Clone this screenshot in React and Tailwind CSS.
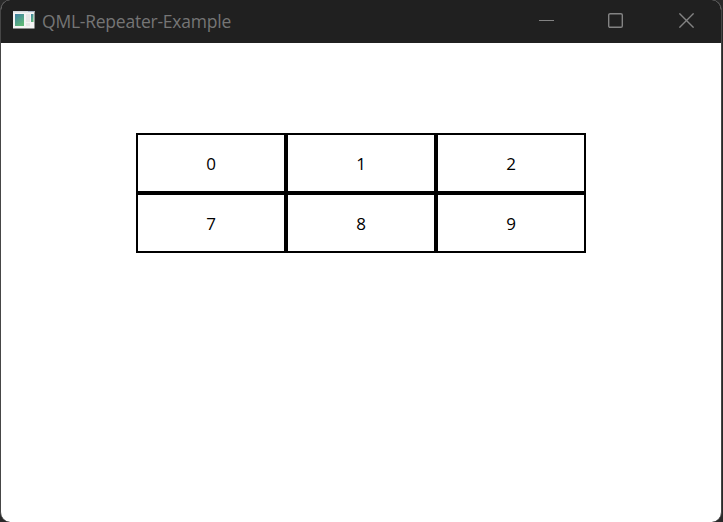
const cells = [0, 1, 2, 7, 8, 9];

function AppIcon() {
  return (
    <svg width="22" height="18" viewBox="0 0 22 18" className="mb-[2px] shrink-0">
      <defs>
        <linearGradient id="pane" x1="0" y1="0" x2="0.6" y2="1">
          <stop offset="0" stopColor="#3f7fa6" />
          <stop offset="1" stopColor="#5fb777" />
        </linearGradient>
      </defs>
      <rect width="21.5" height="17.5" fill="#f4f4f4" />
      <rect width="21.5" height="1.5" fill="#d5d9de" />
      <rect x="15" width="6" height="1" fill="#a8b4c8" />
      <rect x="2" y="3" width="9" height="12" fill="url(#pane)" />
      <rect x="13" y="3" width="4" height="8" fill="#e7e7e7" />
      <rect x="13" y="12" width="4" height="3" fill="#e7e7e7" />
      <rect x="18" y="3" width="2.5" height="8" fill="url(#pane)" />
    </svg>
  );
}

function WindowControls() {
  return (
    <div className="flex h-full text-[#838383]">
      <button aria-label="Minimize" className="flex h-full w-[69px] items-center justify-center">
        <svg width="15" height="15" viewBox="0 0 15 15">
          <path d="M0 7.5H15" stroke="currentColor" />
        </svg>
      </button>
      <button aria-label="Maximize" className="flex h-full w-[69px] items-center justify-center">
        <svg width="15" height="15" viewBox="0 0 15 15" fill="none">
          <rect x="0.7" y="0.7" width="13.6" height="13.6" rx="1.4" stroke="currentColor" strokeWidth="1.4" />
        </svg>
      </button>
      <button aria-label="Close" className="flex h-full w-[73px] items-center justify-center">
        <svg width="15" height="15" viewBox="0 0 15 15">
          <path d="M0.4 0.4L14.6 14.6M14.6 0.4L0.4 14.6" stroke="currentColor" strokeWidth="1.4" />
        </svg>
      </button>
    </div>
  );
}

export default function App() {
  return (
    <div className="h-[522px] w-[723px] overflow-hidden bg-[#292929] pr-px font-['Open_Sans','Noto_Sans',sans-serif]">
      <div className="flex h-full flex-col overflow-hidden rounded-[10px] border-x border-[#464646] bg-white">
        <header className="flex h-[43px] shrink-0 items-center justify-between bg-[#202020] pb-[2px] pl-3">
          <div className="flex items-center gap-[7px]">
            <AppIcon />
            <span className="text-[17.5px] leading-6 tracking-[-0.23px] text-[#757575]">QML-Repeater-Example</span>
          </div>
          <div className="-mr-[2px] h-full">
            <WindowControls />
          </div>
        </header>
        <main className="flex flex-1 justify-center pt-[90px]">
          <div className="grid h-[120px] w-[450px] grid-cols-3 grid-rows-2">
            {cells.map((n) => (
              <div key={n} className="flex items-center justify-center border-2 border-black pt-[2px] text-[17px] leading-6 text-black">
                {n}
              </div>
            ))}
          </div>
        </main>
      </div>
    </div>
  );
}
